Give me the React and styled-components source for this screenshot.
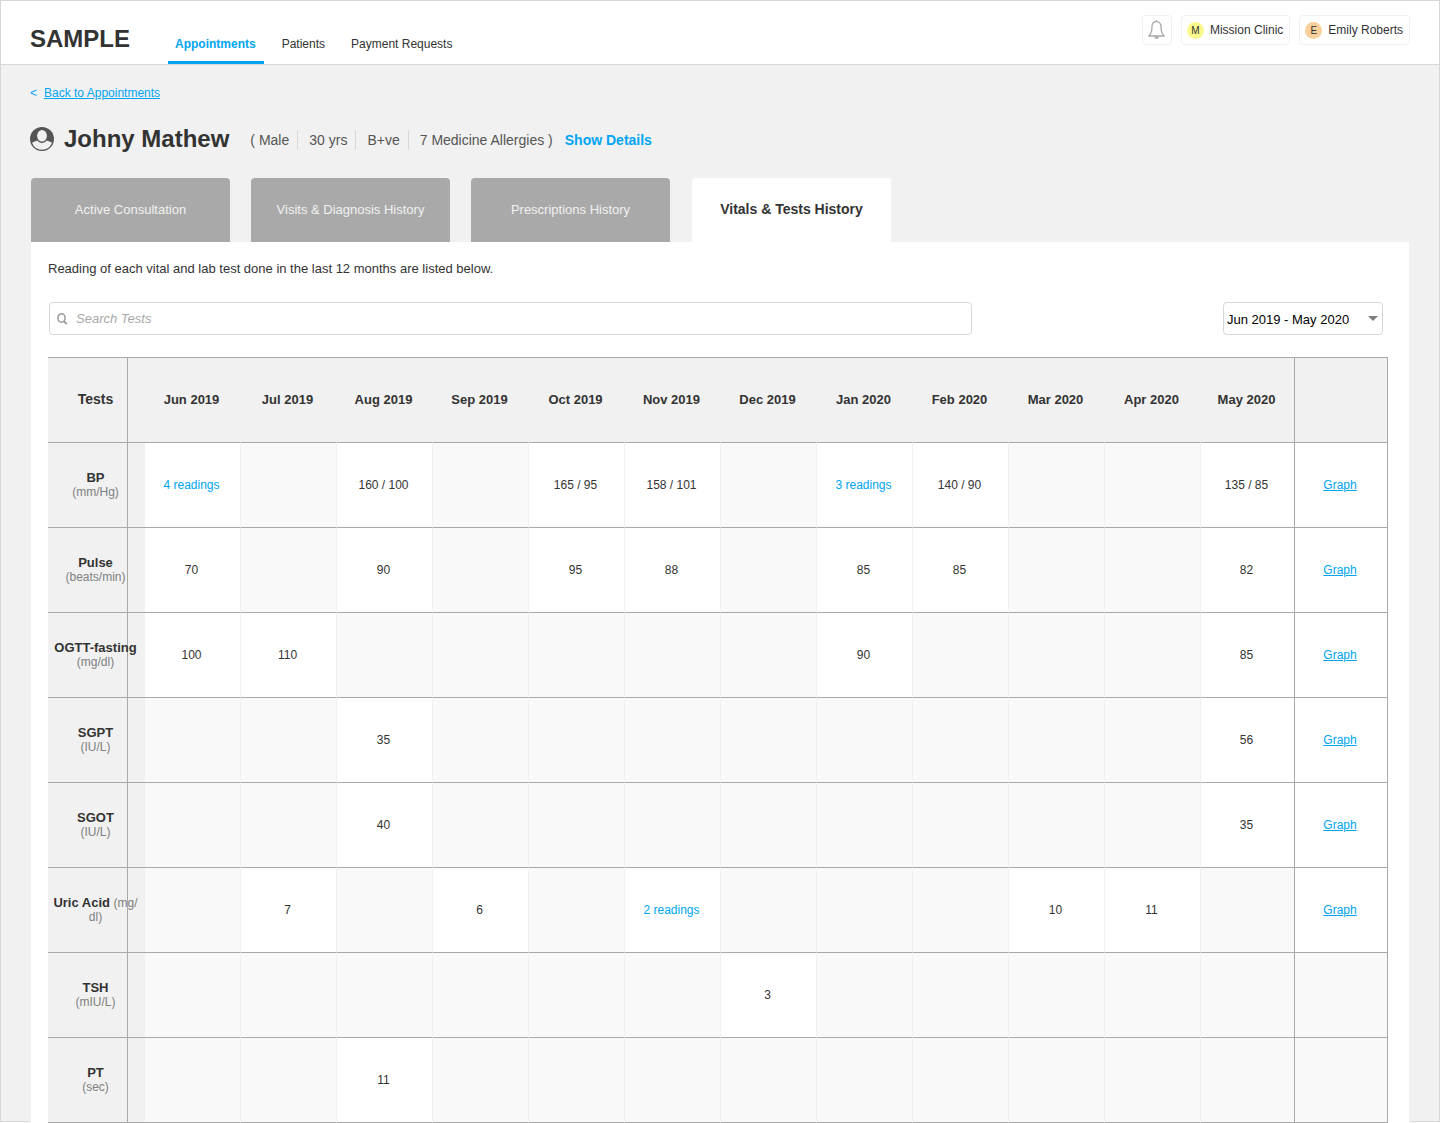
import styled, { createGlobalStyle } from 'styled-components';

const GlobalStyle = createGlobalStyle`
  :root {
    --blue: #00a5f1;
    --dark: #333333;
    --gray: #f1f1f1;
    --line: #a9a9a9;
    --border: #d7d7d7;
  }

  * {
    box-sizing: border-box;
  }

  body {
    margin: 0;
    padding-bottom: 1px;
    color: var(--dark);
    font-family: 'Liberation Sans', Arial, sans-serif;
    font-size: 13px;
  }

  a {
    color: var(--blue);
  }

  button,
  input,
  select {
    font: inherit;
  }
`;

const PageStyle = styled.div`
  background-color: var(--gray);
  border: 1px solid var(--border);
`;

const HeaderStyle = styled.header`
  display: flex;
  height: 64px;
  padding: 0 29px;
  background-color: #ffffff;
  border-bottom: 1px solid var(--border);
`;

const Logo = styled.div`
  margin-right: 38px;
  padding-top: 14px;
  font-size: 24px;
  font-weight: bold;
  line-height: 48px;
`;

const NavStyle = styled.nav`
  display: flex;
  flex: 1;
  gap: 11px;
`;

const NavLink = styled.a`
  padding: 28px 8px 0 7px;
  border-bottom: 3px solid ${({ $active }) => ($active ? 'var(--blue)' : 'transparent')};
  color: ${({ $active }) => ($active ? 'var(--blue)' : 'var(--dark)')};
  font-size: 12px;
  font-weight: ${({ $active }) => ($active ? 'bold' : 'normal')};
  line-height: 30px;
  text-decoration: none;
`;

const HeaderActions = styled.div`
  display: flex;
  align-items: flex-start;
  gap: 9px;
  padding-top: 14px;
`;

const HeaderButton = styled.button`
  display: flex;
  align-items: center;
  gap: 6px;
  height: 30px;
  padding: 0 6px 0 5px;
  background: none;
  border: 1px solid var(--gray);
  border-radius: 4px;
  color: var(--dark);
  font-size: 12px;
`;

const Initial = styled.span`
  width: 17px;
  height: 17px;
  border-radius: 50%;
  background-color: ${({ $color }) => $color};
  font-size: 10px;
  line-height: 18px;
  text-align: center;
`;

const BackStyle = styled.div`
  display: flex;
  gap: 7px;
  padding: 20px 29px 0;
  color: var(--blue);
  font-size: 12px;
  line-height: 16px;
`;

const PatientStyle = styled.section`
  display: flex;
  align-items: center;
  padding: 22px 29px 0;

  h1 {
    margin: 0 21px 0 10px;
    font-size: 24px;
    line-height: 32px;
  }

  ul {
    display: flex;
    margin: 0;
    padding: 2px 0 0;
    list-style: none;
    color: #555555;
    font-size: 14px;
    line-height: 20px;
  }

  li {
    padding: 0 8px 0 11px;
    border-left: 1px solid var(--border);

    &:first-child {
      padding-left: 0;
      border-left: 0;
    }
  }
`;

const DetailsButton = styled.button`
  padding: 2px 4px 0;
  background: none;
  border: 0;
  color: var(--blue);
  font-size: 14px;
  font-weight: bold;
  line-height: 20px;
`;

const TabsStyle = styled.div`
  display: flex;
  gap: 21px;
  padding: 23px 30px 0;
`;

const Tab = styled.button`
  width: ${({ $active }) => ($active ? '201px' : '199px')};
  height: 64px;
  padding: 0 0 2px;
  border: solid var(--gray);
  border-width: ${({ $active }) => ($active ? '0 1px' : '0')};
  border-radius: 4px 4px 0 0;
  background-color: ${({ $active }) => ($active ? '#ffffff' : '#a9a9a9')};
  color: ${({ $active }) => ($active ? 'var(--dark)' : '#f1f1f1')};
  font-size: ${({ $active }) => ($active ? '14px' : '13px')};
  font-weight: ${({ $active }) => ($active ? 'bold' : 'normal')};
`;

/* the panel runs over the bottom border of the page */
const PanelStyle = styled.main`
  margin: 0 29px -2px;
  padding: 0 21px 0 17px;
  background-color: #ffffff;
  border: solid var(--gray);
  border-width: 0 1px;

  p {
    margin: 0;
    padding-top: 18px;
    line-height: 18px;
  }
`;

const ToolbarStyle = styled.div`
  display: flex;
  justify-content: space-between;
  gap: 20px;
  padding: 24px 5px 22px 1px;
`;

const SearchStyle = styled.label`
  display: flex;
  align-items: center;
  gap: 8px;
  flex: 0 1 923px;
  height: 33px;
  padding: 0 6px;
  border: 1px solid var(--border);
  border-radius: 4px;

  input {
    flex: 1;
    padding: 0;
    border: 0;
    outline: 0;
  }

  input::placeholder {
    color: #a9a9a9;
    font-style: italic;
    opacity: 1;
  }
`;

const SelectStyle = styled.div`
  display: grid;
  grid-template-columns: 1fr 10px;
  align-items: center;
  width: 160px;
  padding-right: 4px;
  border: 1px solid var(--border);
  border-radius: 4px;

  select {
    grid-area: 1 / 1 / 2 / 3;
    height: 31px;
    padding: 2px 0 0 3px;
    appearance: none;
    background: none;
    border: 0;
    color: #000000;
  }

  svg {
    grid-area: 1 / 2 / 2 / 3;
    pointer-events: none;
  }
`;

const TableStyle = styled.table`
  width: 100%;
  table-layout: fixed;
  border-collapse: separate;
  border-spacing: 0;
  border-top: 1px solid var(--line);
  line-height: 15px;
  text-align: center;

  th,
  td {
    height: 85px;
    padding: 0 2px 0 0;
    border-bottom: 1px solid var(--line);
  }

  thead th {
    padding-bottom: 2px;
    background-color: var(--gray);
  }
`;

const Col = styled.col`
  width: ${({ $width }) => $width};
`;

/* divider sits inside the cell, the label is wider than the part before it */
const TestCell = styled.th`
  && {
    background: linear-gradient(var(--line), var(--line)) 79px 0 / 1px 100% no-repeat var(--gray);
    font-size: ${({ $head }) => ($head ? '14px' : '13px')};
    line-height: 14px;
  }

  span {
    color: #7f7f7f;
    font-size: 12px;
    font-weight: normal;
  }
`;

const MonthCell = styled.td`
  background-color: ${({ $filled }) => ($filled ? '#ffffff' : '#f9f9f9')};
  border-right: 1px solid ${({ $last }) => ($last ? 'var(--line)' : 'var(--gray)')};
  font-size: 12px;

  button {
    padding: 0;
    background: none;
    border: 0;
    color: var(--blue);
  }
`;

const MonthHead = styled.th`
  border-right: 1px solid ${({ $last }) => ($last ? 'var(--line)' : 'var(--gray)')};
`;

const GraphCell = styled.td`
  background-color: ${({ $filled }) => ($filled ? '#ffffff' : '#f9f9f9')};
  border-right: 1px solid var(--line);
  font-size: 12px;
`;

const GraphHead = styled.th`
  border-right: 1px solid var(--line);
`;

const months = [
  'Jun 2019',
  'Jul 2019',
  'Aug 2019',
  'Sep 2019',
  'Oct 2019',
  'Nov 2019',
  'Dec 2019',
  'Jan 2020',
  'Feb 2020',
  'Mar 2020',
  'Apr 2020',
  'May 2020',
];

const tests = [
  {
    name: 'BP',
    unit: '(mm/Hg)',
    graph: true,
    values: ['4 readings', '', '160 / 100', '', '165 / 95', '158 / 101', '', '3 readings', '140 / 90', '', '', '135 / 85'],
  },
  {
    name: 'Pulse',
    unit: '(beats/min)',
    graph: true,
    values: ['70', '', '90', '', '95', '88', '', '85', '85', '', '', '82'],
  },
  {
    name: 'OGTT-fasting',
    unit: '(mg/dl)',
    graph: true,
    values: ['100', '110', '', '', '', '', '', '90', '', '', '', '85'],
  },
  {
    name: 'SGPT',
    unit: '(IU/L)',
    graph: true,
    values: ['', '', '35', '', '', '', '', '', '', '', '', '56'],
  },
  {
    name: 'SGOT',
    unit: '(IU/L)',
    graph: true,
    values: ['', '', '40', '', '', '', '', '', '', '', '', '35'],
  },
  {
    name: 'Uric Acid',
    unit: (
      <>
        (mg/
        <wbr />
        dl)
      </>
    ),
    inline: true,
    graph: true,
    values: ['', '7', '', '6', '', '2 readings', '', '', '', '10', '11', ''],
  },
  {
    name: 'TSH',
    unit: '(mIU/L)',
    values: ['', '', '', '', '', '', '3', '', '', '', '', ''],
  },
  {
    name: 'PT',
    unit: '(sec)',
    values: ['', '', '11', '', '', '', '', '', '', '', '', ''],
  },
];

function BellIcon() {
  return (
    <svg width="17" height="20" viewBox="0 0 17 20" fill="none" stroke="#a9a9a9" strokeWidth="1.3">
      <path
        d="M8.500 1.600c-3.200 0-4.500 2.200-4.500 5.200 0 5-1 7.200-3.200 9.200h15.400c-2.200-2-3.200-4.200-3.200-9.200 0-3-1.300-5.200-4.500-5.200z"
        strokeLinejoin="round"
      />
      <path d="M8.500 .2v1.400" />
      <path d="M6.100 16.600a2.400 2.400 0 0 0 4.800 0z" fill="#a9a9a9" stroke="none" />
    </svg>
  );
}

function UserIcon() {
  return (
    <svg width="24" height="24" viewBox="0 0 24 24">
      <circle cx="12" cy="12" r="12" fill="#555555" />
      <ellipse cx="12" cy="8.8" rx="4.900" ry="5.800" fill="#f1f1f1" />
      <path
        d="M2 15.800C3.500 15 5.500 14.400 7.400 13.600c2 3.200 7.200 3.200 9.200 0 1.900.8 3.900 1.400 5.400 2.200A10.700 10.700 0 0 1 2 15.800z"
        fill="#f1f1f1"
      />
    </svg>
  );
}

function SearchIcon() {
  return (
    <svg width="12" height="12" viewBox="0 0 12 12" fill="none" stroke="#999999" strokeWidth="1.5">
      <ellipse cx="5.500" cy="5" rx="3.600" ry="4.200" />
      <path d="M7.800 8.200l3 2.800" strokeWidth="1.800" />
    </svg>
  );
}

function TestRow({ test }) {
  return (
    <tr>
      <TestCell scope="row">
        {test.name} {!test.inline && <br />}
        <span>{test.unit}</span>
      </TestCell>
      {test.values.map((val, i) => (
        <MonthCell key={months[i]} $filled={val !== ''} $last={i === months.length - 1}>
          {val.includes('readings') ? <button type="button">{val}</button> : val}
        </MonthCell>
      ))}
      <GraphCell $filled={test.graph}>{test.graph && <a href="#graph">Graph</a>}</GraphCell>
    </tr>
  );
}

function App() {
  return (
    <PageStyle>
      <GlobalStyle />
      <HeaderStyle>
        <Logo>SAMPLE</Logo>
        <NavStyle>
          <NavLink href="#appointments" $active>
            Appointments
          </NavLink>
          <NavLink href="#patients">Patients</NavLink>
          <NavLink href="#payments">Payment Requests</NavLink>
        </NavStyle>
        <HeaderActions>
          <HeaderButton type="button" aria-label="Notifications">
            <BellIcon />
          </HeaderButton>
          <HeaderButton type="button">
            <Initial $color="#f8f88c">M</Initial>
            Mission Clinic
          </HeaderButton>
          <HeaderButton type="button">
            <Initial $color="#f7d09b">E</Initial>
            Emily Roberts
          </HeaderButton>
        </HeaderActions>
      </HeaderStyle>

      <BackStyle>
        &lt; <a href="#appointments">Back to Appointments</a>
      </BackStyle>

      <PatientStyle>
        <UserIcon />
        <h1>Johny Mathew</h1>
        <ul>
          <li>( Male</li>
          <li>30 yrs</li>
          <li>B+ve</li>
          <li>7 Medicine Allergies )</li>
        </ul>
        <DetailsButton type="button">Show Details</DetailsButton>
      </PatientStyle>

      <TabsStyle>
        <Tab type="button">Active Consultation</Tab>
        <Tab type="button">Visits &amp; Diagnosis History</Tab>
        <Tab type="button">Prescriptions History</Tab>
        <Tab type="button" $active>
          Vitals &amp; Tests History
        </Tab>
      </TabsStyle>

      <PanelStyle>
        <p>Reading of each vital and lab test done in the last 12 months are listed below.</p>
        <ToolbarStyle>
          <SearchStyle>
            <SearchIcon />
            <input type="text" placeholder="Search Tests" aria-label="Search Tests" />
          </SearchStyle>
          <SelectStyle>
            <select aria-label="Period">
              <option>Jun 2019 - May 2020</option>
            </select>
            <svg width="10" height="5" viewBox="0 0 10 5">
              <path d="M0 0h10L5 5z" fill="#7f7f7f" />
            </svg>
          </SelectStyle>
        </ToolbarStyle>
        <TableStyle>
          <colgroup>
            <Col $width="97px" />
            {months.map((month, i) => (
              <Col key={month} $width={i === months.length - 1 ? '94px' : 'auto'} />
            ))}
            <Col $width="93px" />
          </colgroup>
          <thead>
            <tr>
              <TestCell scope="col" $head>
                Tests
              </TestCell>
              {months.map((month, i) => (
                <MonthHead key={month} scope="col" $last={i === months.length - 1}>
                  {month}
                </MonthHead>
              ))}
              <GraphHead />
            </tr>
          </thead>
          <tbody>
            {tests.map((test) => (
              <TestRow key={test.name} test={test} />
            ))}
          </tbody>
        </TableStyle>
      </PanelStyle>
    </PageStyle>
  );
}

export default App;
